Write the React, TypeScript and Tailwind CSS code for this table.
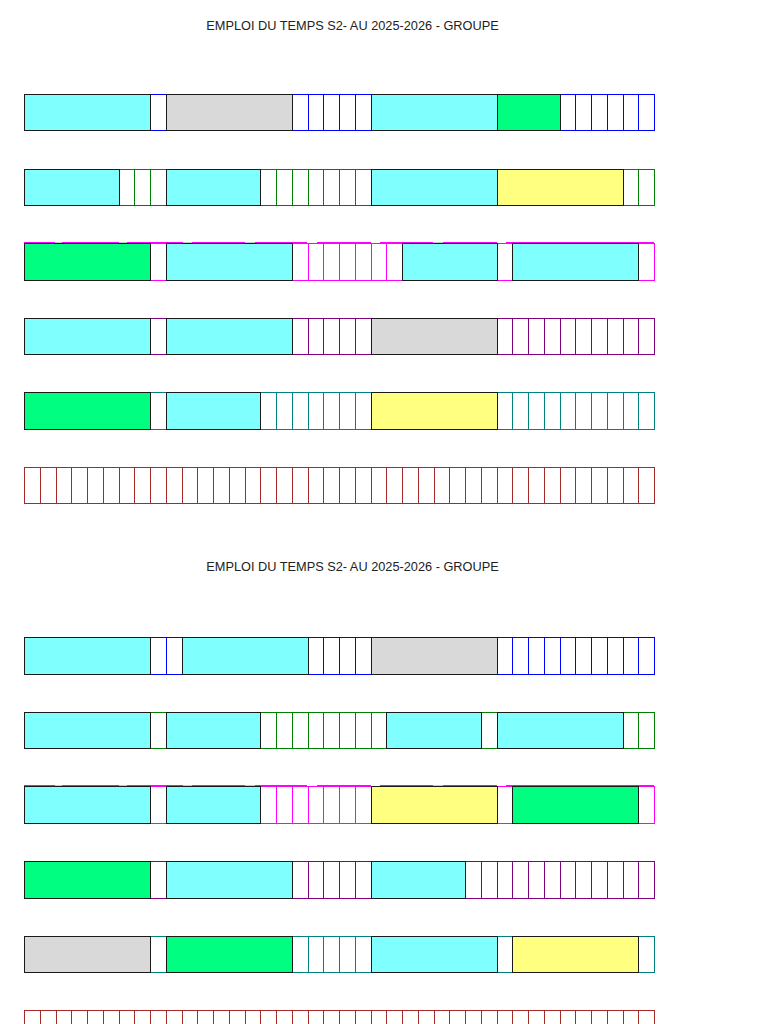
import React from 'react';

// a row is written as tokens: letter + number of cells
// . empty cell, C cyan, G gray, V green, Y yellow
const fills: Record<string, string> = {
  C: 'bg-[#80ffff]',
  G: 'bg-[#d9d9d9]',
  V: 'bg-[#00ff80]',
  Y: 'bg-[#ffff80]',
};

const spans: Record<number, string> = {
  4: 'col-span-4',
  6: 'col-span-6',
  8: 'col-span-8',
};

const lines: Record<string, string> = {
  blue: 'border-[#0000ff]',
  green: 'border-[#008000]',
  magenta: 'border-[#ff00ff]',
  purple: 'border-[#800080]',
  teal: 'border-[#008080]',
  red: 'border-[#a52a2a]',
};

type Row = { color: keyof typeof lines; cells: string; torn?: boolean };

const week1: Row[] = [
  { color: 'blue', cells: 'C8 .1 G8 .5 C8 V4 .6' },
  { color: 'green', cells: 'C6 .3 C6 .7 C8 Y8 .2' },
  { color: 'magenta', cells: 'V8 .1 C8 .7 C6 .1 C8 .1', torn: true },
  { color: 'purple', cells: 'C8 .1 C8 .5 G8 .10' },
  { color: 'teal', cells: 'V8 .1 C6 .7 Y8 .10' },
  { color: 'red', cells: '.40' },
];

const week2: Row[] = [
  { color: 'blue', cells: 'C8 .2 C8 .4 G8 .10' },
  { color: 'green', cells: 'C8 .1 C6 .8 C6 .1 C8 .2' },
  { color: 'magenta', cells: 'C8 .1 C6 .7 Y8 .1 V8 .1', torn: true },
  { color: 'purple', cells: 'V8 .1 C8 .5 C6 .12' },
  { color: 'teal', cells: 'G8 .1 V8 .5 C8 .1 Y8 .1' },
  { color: 'red', cells: '.40' },
];

// bits of the top line of the pink rows (x from row start, px)
const tornTop: [number, number, string][] = [
  [0, 31, '#ff00ff'],
  [31, 38, '#c8c8c8'],
  [38, 95, '#ff00ff'],
  [95, 103, '#c8c8c8'],
  [103, 159, '#ff00ff'],
  [159, 168, '#c8c8c8'],
  [168, 221, '#ff00ff'],
  [221, 231, '#c8c8c8'],
  [231, 283, '#ff00ff'],
  [293, 347, '#ff00ff'],
  [356, 409, '#ff00ff'],
  [409, 419, '#c8c8c8'],
  [419, 473, '#ff00ff'],
  [482, 630, '#ff00ff'],
];

function TimeRow({ row }: { row: Row }) {
  const line = lines[row.color];
  const items: { kind: string; key: string }[] = [];
  row.cells.split(' ').forEach((tok, t) => {
    const kind = tok[0];
    const n = parseInt(tok.slice(1), 10);
    if (kind === '.') {
      for (let i = 0; i < n; i++) items.push({ kind: '.', key: `${t}-${i}` });
    } else {
      items.push({ kind: tok, key: `${t}` });
    }
  });

  return (
    <div className={`relative grid grid-cols-[repeat(40,minmax(0,1fr))] w-[631px] h-[37.5px] border-r ${line}`}>
      {items.map((it) =>
        it.kind === '.' ? (
          <div key={it.key} className={`border-l border-y ${line}`} />
        ) : (
          <div
            key={it.key}
            className={`relative z-10 -mr-px border border-[#1a1a1a] ${fills[it.kind[0]]} ${spans[parseInt(it.kind.slice(1), 10)]}`}
          />
        )
      )}
      {row.torn && (
        <div className="absolute left-0 top-[-1.5px] z-20 w-[630px] h-[1.5px] bg-white">
          {tornTop.map(([a, b, c]) => (
            <span
              key={a}
              className="absolute top-0 h-full"
              style={{ left: a, width: b - a, backgroundColor: c }}
            />
          ))}
        </div>
      )}
    </div>
  );
}

function Week({ rows, className, rowsGap }: { rows: Row[]; className: string; rowsGap: string }) {
  return (
    <section className={className}>
      <h1 className="w-[705px] text-center text-[12.75px] leading-[15px] text-[#222] font-['Liberation_Sans',Arial,sans-serif]">
        EMPLOI DU TEMPS S2- AU 2025-2026 - GROUPE
      </h1>
      <div className={`flex flex-col gap-[37.1px] pl-[24px] ${rowsGap}`}>
        {rows.map((r, i) => (
          <TimeRow key={i} row={r} />
        ))}
      </div>
    </section>
  );
}

export default function App() {
  return (
    <div className="w-[768px] h-[1024px] overflow-hidden bg-white pt-[18.3px]">
      <Week rows={week1} className="" rowsGap="mt-[60.7px]" />
      <Week rows={week2} className="mt-[54.8px]" rowsGap="mt-[63px]" />
    </div>
  );
}
